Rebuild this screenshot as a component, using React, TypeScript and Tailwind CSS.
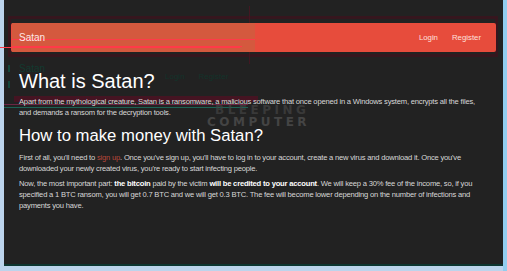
import React from "react";

export default function App() {
  return (
    <div className="w-[507px] h-[271px] bg-[#bcd4ec] overflow-hidden relative" style={{ fontFamily: '"Liberation Sans", Arial, sans-serif' }}>
      <div className="absolute right-0 top-0 w-[4px] h-[271px] bg-[#92cdee]" />
      <div className="ml-[4px] mr-[4px] h-[266px] bg-[#222222] border-b-2 border-[#0e3630] relative">
        {/* ghost overlay artifacts from the captured design tool */}
        <div className="absolute left-[4px] top-[16px] w-[490px] h-[41px] border-[3px] border-[#36161e] pointer-events-none" />
        <div className="absolute left-[245px] top-[6px] w-[1px] h-[58px] bg-[#431722]" />
        <div className="absolute left-[15px] top-[64px] text-[10px] leading-[10px] text-[#123a30]">Satan</div>
        <div className="absolute left-[4px] top-[65px] w-[2px] h-[7px] bg-[#15463a]" />
        <div className="absolute left-[4px] top-[81px] w-[2px] h-[7px] bg-[#15463a]" />
        <div className="absolute left-[161px] top-[73px] text-[8px] leading-[8px] text-[#13332a] flex gap-[14px]">
          <span>Login</span>
          <span>Register</span>
        </div>
        <div className="absolute left-[10px] top-[96px] w-[244px] h-[6px] bg-[#451422]" />
        <div className="absolute left-0 top-[104px] w-[244px] h-[1px] bg-[#6e2644]" />
        <div className="absolute left-0 top-[107px] w-[244px] h-[1px] bg-[#1c6254]" />

        <div className="pt-[23px] px-[7px] relative">
          <nav className="h-[29px] bg-[#e74c3c] rounded-[2px] flex items-center justify-between pl-[8px] pr-[15px] text-white relative overflow-hidden">
            <div className="absolute left-[1px] top-0 w-[243px] h-[29px] bg-[#d4593e]" />
            <div className="absolute left-[1px] top-[16px] w-[243px] h-[1px] bg-[#ff3a48]" />
            <div className="absolute left-[1px] top-[23px] w-[230px] h-[1px] bg-[#ff3a48]" />
            <span className="text-[10px] relative text-[#ffe8e8]">Satan</span>
            <div className="flex gap-[14px] text-[7.8px] relative text-[#ffe0dc]">
              <span>Login</span>
              <span>Register</span>
            </div>
          </nav>
          <div className="absolute left-[-4px] top-[47px] w-[240px] h-[1px] bg-[#ff3a48]" />
          <div className="px-[8px] pt-[18px] text-[#d8d8d8] flex flex-col">
            <h1 className="text-[20px] leading-[22px] text-white">What is Satan?</h1>
            <p className="text-[7.6px] leading-[11px] tracking-[-0.2px] mt-[4px] relative">
              Apart from the mythological creature, Satan is a ransomware, a malicious software that once opened in a Windows system, encrypts all the files, and demands a ransom for the decryption tools.
            </p>
            <h2 className="text-[16.7px] leading-[18px] text-white mt-[9px]">How to make money with Satan?</h2>
            <p className="text-[7.6px] leading-[11px] tracking-[-0.2px] mt-[7px]">
              First of all, you'll need to <span className="text-[#b8473a]">sign up</span>. Once you've sign up, you'll have to log in to your account, create a new virus and download it. Once you've downloaded your newly created virus, you're ready to start infecting people.
            </p>
            <p className="text-[7.6px] leading-[11px] tracking-[-0.2px] mt-[4px]">
              Now, the most important part: <b className="text-white">the bitcoin</b> paid by the victim <b className="text-white">will be credited to your account</b>. We will keep a 30% fee of the income, so, if you specified a 1 BTC ransom, you will get 0.7 BTC and we will get 0.3 BTC. The fee will become lower depending on the number of infections and payments you have.
            </p>
          </div>
        </div>
        <div className="absolute left-[203px] top-[104px] text-[#444444] font-bold text-[12px] leading-[12px] tracking-[3.5px] pointer-events-none" style={{ fontFamily: '"DejaVu Sans", sans-serif' }}>
          <div className="opacity-70 pl-[8px]">BLEEPING</div>
          <div>COMPUTER</div>
        </div>
      </div>
    </div>
  );
}
